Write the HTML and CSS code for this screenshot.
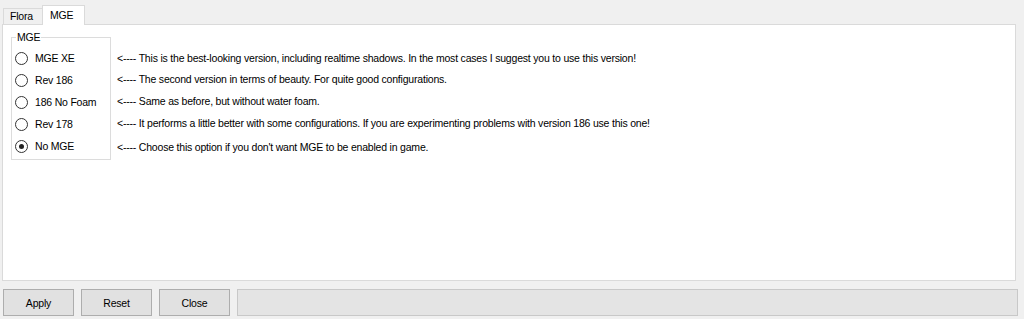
FILE: index.html
```html
<!DOCTYPE html>
<html lang="en">
<head>
    <meta charset="UTF-8">
    <title>MGE</title>
    <link rel="stylesheet" href="styles.css">
</head>
<body>
    <div class="window">
        <!-- Abas -->
        <div class="tabs">
            <div class="tab">Flora</div>
            <div class="tab active">MGE</div>
        </div>

        <!-- Painel da aba MGE -->
        <div class="panel">
            <div class="options">
                <fieldset class="group">
                    <legend>MGE</legend>
                    <div class="radio"><span class="dot"></span>MGE XE</div>
                    <div class="radio"><span class="dot"></span>Rev 186</div>
                    <div class="radio"><span class="dot"></span>186 No Foam</div>
                    <div class="radio"><span class="dot"></span>Rev 178</div>
                    <div class="radio"><span class="dot checked"></span>No MGE</div>
                </fieldset>

                <div class="notes">
                    <div class="note">&lt;---- This is the best-looking version, including realtime shadows. In the most cases I suggest you to use this version!</div>
                    <div class="note">&lt;---- The second version in terms of beauty. For quite good configurations.</div>
                    <div class="note">&lt;---- Same as before, but without water foam.</div>
                    <div class="note">&lt;---- It performs a little better with some configurations. If you are experimenting problems with version 186 use this one!</div>
                    <div class="note">&lt;---- Choose this option if you don't want MGE to be enabled in game.</div>
                </div>
            </div>
        </div>

        <!-- Botões -->
        <div class="buttons">
            <button>Apply</button>
            <button>Reset</button>
            <button>Close</button>
            <div class="status"></div>
        </div>
    </div>
</body>
</html>
```

FILE: styles.css
```css
/* Janela */
body {
    margin: 0;
    background: #f0f0f0;
    font-family: 'Liberation Sans', Arial, sans-serif;
    font-size: 10.5px;
    letter-spacing: -0.2px;
    color: #000;
}

.window {
    padding: 5px 8px 0 2px;
}

/* Abas */
.tabs {
    display: flex;
    align-items: flex-end;
    height: 19px;
}

.tab {
    width: 32px;
    height: 15px;
    line-height: 15px;
    padding: 0 0 0 6px;
    border: 1px solid #dadada;
    border-bottom: none;
    background: #f0f0f0;
    margin-left: 1px;
}

.tab.active {
    width: 34px;
    height: 19px;
    line-height: 19px;
    padding: 0 0 0 7px;
    background: #fff;
    margin-left: -1px;
    margin-bottom: -1px;
    position: relative;
}

/* Painel */
.panel {
    height: 255px;
    background: #fff;
    border: 1px solid #dadada;
}

.options {
    display: flex;
    padding: 6px 0 0 8px;
}

.group {
    width: 98px;
    margin: 0;
    padding: 3px 0 0 0;
    border: 1px solid #dcdcdc;
}

.group legend {
    padding: 0 1px;
    margin-left: 4px;
    line-height: 13px;
}

.radio {
    display: flex;
    align-items: center;
    height: 22px;
    padding-left: 3px;
}

.dot {
    width: 11px;
    height: 11px;
    border: 1px solid #333;
    border-radius: 50%;
    margin-right: 7px;
    position: relative;
}

.dot.checked::after {
    content: '';
    position: absolute;
    left: 3px;
    top: 3px;
    width: 5px;
    height: 5px;
    border-radius: 50%;
    background: #222;
}

/* Descrições */
.notes {
    padding: 18px 0 0 6px;
}

.note {
    line-height: 22px;
    white-space: nowrap;
}

.note:first-child {
    line-height: 19px;
}

.note:last-child {
    line-height: 26px;
}

/* Botões */
.buttons {
    display: flex;
    gap: 7px;
    margin-top: 8px;
    padding-left: 1px;
}

button {
    width: 71px;
    height: 27px;
    font-family: inherit;
    font-size: 10.5px;
    letter-spacing: -0.2px;
    color: #000;
    background: #e1e1e1;
    border: 1px solid #adadad;
    padding: 0;
}

.status {
    flex: 1;
    height: 25px;
    background: #e4e4e4;
    border: 1px solid #c8c8c8;
    margin-right: -2px;
}
```
